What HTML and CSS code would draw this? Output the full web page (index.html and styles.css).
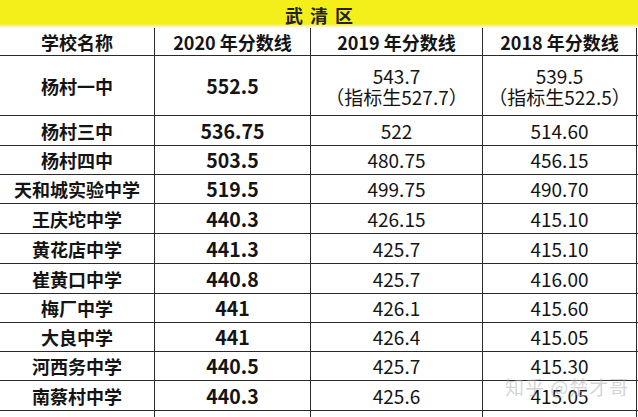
FILE: index.html
```html
<!DOCTYPE html>
<html lang="zh">
<head>
<meta charset="utf-8">
<link rel="stylesheet" href="styles.css">
</head>
<body>
<div class="sheet">
  <div class="title"><span>武清区</span></div>
  <div class="row head h28">
    <div class="c">学校名称</div>
    <div class="c">2020 年分数线</div>
    <div class="c">2019 年分数线</div>
    <div class="c">2018 年分数线</div>
  </div>
  <div class="row h60">
    <div class="c n">杨村一中</div>
    <div class="c b">552.5</div>
    <div class="c two"><span>543.7</span><span>（指标生527.7）</span></div>
    <div class="c two"><span>539.5</span><span>（指标生522.5）</span></div>
  </div>
  <div class="row h30"><div class="c n">杨村三中</div><div class="c b">536.75</div><div class="c">522</div><div class="c">514.60</div></div>
  <div class="row h29"><div class="c n">杨村四中</div><div class="c b">503.5</div><div class="c">480.75</div><div class="c">456.15</div></div>
  <div class="row h29"><div class="c n">天和城实验中学</div><div class="c b">519.5</div><div class="c">499.75</div><div class="c">490.70</div></div>
  <div class="row h30"><div class="c n">王庆坨中学</div><div class="c b">440.3</div><div class="c">426.15</div><div class="c">415.10</div></div>
  <div class="row h30"><div class="c n">黄花店中学</div><div class="c b">441.3</div><div class="c">425.7</div><div class="c">415.10</div></div>
  <div class="row h30"><div class="c n">崔黄口中学</div><div class="c b">440.8</div><div class="c">425.7</div><div class="c">416.00</div></div>
  <div class="row h29"><div class="c n">梅厂中学</div><div class="c b">441</div><div class="c">426.1</div><div class="c">415.60</div></div>
  <div class="row h29"><div class="c n">大良中学</div><div class="c b">441</div><div class="c">426.4</div><div class="c">415.05</div></div>
  <div class="row h29"><div class="c n">河西务中学</div><div class="c b">440.5</div><div class="c">425.7</div><div class="c">415.30</div></div>
  <div class="row h30"><div class="c n">南蔡村中学</div><div class="c b">440.3</div><div class="c">425.6</div><div class="c">415.05</div></div>
  <div class="row tail"><div class="c"></div><div class="c"></div><div class="c"></div><div class="c"></div></div>
  <div class="watermark">知乎 @楚才哥</div>
</div>
</body>
</html>
```

FILE: styles.css
```css
* { box-sizing: border-box; }
html, body { margin: 0; padding: 0; background: #ffffff; }
body {
  font-family: "Noto Sans CJK SC", "Noto Sans", sans-serif;
  color: #141414;
}
.sheet {
  position: relative;
  width: 638px;
  height: 417px;
  overflow: hidden;
}
.title {
  height: 28px;
  background: linear-gradient(to bottom, #f4ef1a 0, #f4ef1a 24px, #f8f3a0 26px, #ffffff 28px);
  display: flex;
  justify-content: center;
  align-items: flex-end;
}
.title span {
  font-size: 18px;
  font-weight: 700;
  letter-spacing: 7px;
  line-height: 26px;
  padding-left: 7px;
  color: #222;
}
.row {
  display: grid;
  grid-template-columns: 155px 156px 172px 154px;
  border-bottom: 1px solid #2b2b2b;
}
.h28 { height: 28px; }
.h29 { height: 29px; }
.h30 { height: 30px; }
.h60 { height: 60px; }
.tail { height: 20px; border-bottom: none; }
.c {
  border-right: 1px solid #2b2b2b;
  display: flex;
  align-items: center;
  justify-content: center;
  font-size: 19px;
  line-height: 20px;
  white-space: nowrap;
}
.head .c { font-weight: 700; font-size: 18px; }
.n { font-weight: 700; font-size: 18px; }
.b { font-weight: 700; font-size: 19.5px; }
.two { flex-direction: column; line-height: 21px; }
.watermark {
  position: absolute;
  left: 505px;
  top: 373px;
  font-size: 19px;
  letter-spacing: 1px;
  color: rgba(170, 170, 170, 0.5);
  white-space: nowrap;
}
```
